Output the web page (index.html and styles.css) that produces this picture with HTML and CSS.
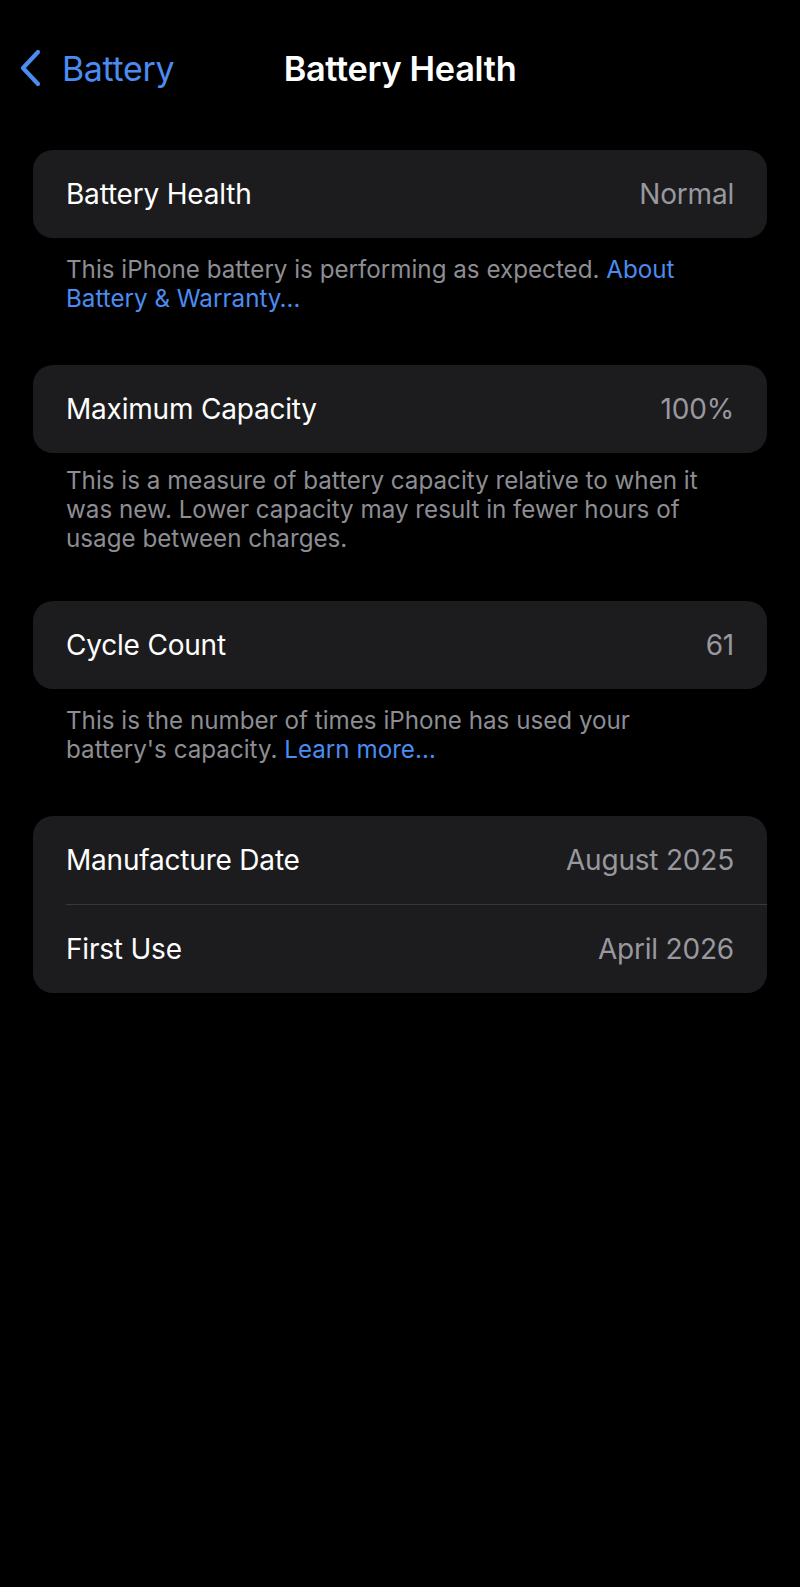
FILE: index.html
```html
<!DOCTYPE html>
<html lang="en">
<head>
  <meta charset="UTF-8" />
  <meta name="viewport" content="width=device-width, initial-scale=1" />
  <title>Battery Health</title>
  <link rel="stylesheet" href="styles.css">
</head>
<body>
  <header class="nav">
    <a class="nav-back" href="#">
      <svg class="chevron" width="24" height="38" viewBox="0 0 24 38" aria-hidden="true">
        <path d="M20 3 L5 19 L20 35" fill="none" stroke="currentColor" stroke-width="4.2" stroke-linecap="round" stroke-linejoin="round"/>
      </svg>
      <span>Battery</span>
    </a>
    <h1 class="nav-title">Battery Health</h1>
    <div></div>
  </header>

  <main class="settings">
    <section class="group">
      <div class="card">
        <div class="row"><span class="label">Battery Health</span><span class="value">Normal</span></div>
      </div>
      <p class="footer">This iPhone battery is performing as expected. <a href="#">About Battery &amp; Warranty…</a></p>
    </section>

    <section class="group">
      <div class="card">
        <div class="row"><span class="label">Maximum Capacity</span><span class="value">100%</span></div>
      </div>
      <p class="footer footer-compact">This is a measure of battery capacity relative to when it was new. Lower capacity may result in fewer hours of usage between charges.</p>
    </section>

    <section class="group">
      <div class="card">
        <div class="row"><span class="label">Cycle Count</span><span class="value">61</span></div>
      </div>
      <p class="footer">This is the number of times iPhone has used your battery's capacity. <a href="#">Learn more…</a></p>
    </section>

    <section class="group">
      <div class="card">
        <div class="row"><span class="label">Manufacture Date</span><span class="value">August 2025</span></div>
        <div class="row"><span class="label">First Use</span><span class="value">April 2026</span></div>
      </div>
    </section>
  </main>
</body>
</html>
```

FILE: styles.css
```css
body {
  background: #000;
  color: #fff;
  font-family: Inter, "Noto Sans", sans-serif;
  margin: 0;
  min-height: 1587px;
}

.nav {
  display: grid;
  grid-template-columns: 1fr auto 1fr;
  align-items: center;
  height: 48px;
  padding: 44px 0 0 18px;
}

.nav-back {
  display: flex;
  align-items: center;
  gap: 20px;
  color: #4b8cf0;
  text-decoration: none;
  font-size: 33.9px;
  letter-spacing: -0.3px;
}

.nav-back .chevron {
  display: block;
}

.nav-title {
  margin: 0 18px 0 0;
  font-size: 34.3px;
  font-weight: 600;
  letter-spacing: -0.3px;
}

.settings {
  padding: 58px 33px 0;
}

.card {
  background: #1c1c1e;
  border-radius: 20px;
  overflow: hidden;
}

.row {
  display: flex;
  justify-content: space-between;
  align-items: center;
  height: 88px;
  padding: 0 33px;
  font-size: 28px;
  letter-spacing: -0.2px;
}

.row + .row {
  border-top: 1px solid #38383a;
  margin-left: 33px;
  padding-left: 0;
}

.value {
  color: #98989e;
}

.footer {
  margin: 0;
  padding: 17px 33px 52px;
  font-size: 24.2px;
  line-height: 29px;
  color: #8d8d93;
}

.footer-compact {
  padding-top: 13px;
  padding-bottom: 48px;
}

.footer a {
  color: #4b8cf0;
  text-decoration: none;
}
```
